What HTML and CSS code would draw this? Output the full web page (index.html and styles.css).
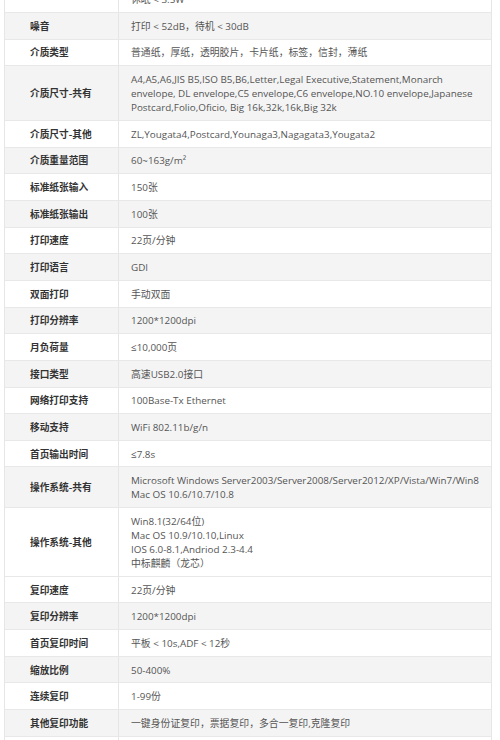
FILE: index.html
```html
<!DOCTYPE html>
<html lang="zh-CN">
<head>
<meta charset="utf-8">
<title>打印机参数</title>
<link rel="stylesheet" href="styles.css">
</head>
<body>
<table class="spec">
  <tbody>
    <tr><td class="k">功耗</td><td class="v">打印 &lt; 450W<br>待机 &lt; 50W<br>休眠 &lt; 3.5W</td></tr>
    <tr class="g"><td class="k">噪音</td><td class="v">打印 &lt; 52dB，待机 &lt; 30dB</td></tr>
    <tr><td class="k">介质类型</td><td class="v">普通纸，厚纸，透明胶片，卡片纸，标签，信封，薄纸</td></tr>
    <tr class="g"><td class="k">介质尺寸-共有</td><td class="v">A4,A5,A6,JIS B5,ISO B5,B6,Letter,Legal Executive,Statement,Monarch<br>envelope, DL envelope,C5 envelope,C6 envelope,NO.10 envelope,Japanese<br>Postcard,Folio,Oficio, Big 16k,32k,16k,Big 32k</td></tr>
    <tr><td class="k">介质尺寸-其他</td><td class="v">ZL,Yougata4,Postcard,Younaga3,Nagagata3,Yougata2</td></tr>
    <tr class="g"><td class="k">介质重量范围</td><td class="v">60~163g/m²</td></tr>
    <tr><td class="k">标准纸张输入</td><td class="v">150张</td></tr>
    <tr class="g"><td class="k">标准纸张输出</td><td class="v">100张</td></tr>
    <tr><td class="k">打印速度</td><td class="v">22页/分钟</td></tr>
    <tr class="g"><td class="k">打印语言</td><td class="v">GDI</td></tr>
    <tr><td class="k">双面打印</td><td class="v">手动双面</td></tr>
    <tr class="g"><td class="k">打印分辨率</td><td class="v">1200*1200dpi</td></tr>
    <tr><td class="k">月负荷量</td><td class="v">≤10,000页</td></tr>
    <tr class="g"><td class="k">接口类型</td><td class="v">高速USB2.0接口</td></tr>
    <tr><td class="k">网络打印支持</td><td class="v">100Base-Tx Ethernet</td></tr>
    <tr class="g"><td class="k">移动支持</td><td class="v">WiFi 802.11b/g/n</td></tr>
    <tr><td class="k">首页输出时间</td><td class="v">≤7.8s</td></tr>
    <tr class="g"><td class="k">操作系统-共有</td><td class="v">Microsoft Windows Server2003/Server2008/Server2012/XP/Vista/Win7/Win8<br>Mac OS 10.6/10.7/10.8</td></tr>
    <tr><td class="k">操作系统-其他</td><td class="v">Win8.1(32/64位)<br>Mac OS 10.9/10.10,Linux<br>IOS 6.0-8.1,Andriod 2.3-4.4<br>中标麒麟（龙芯）</td></tr>
    <tr><td class="k">复印速度</td><td class="v">22页/分钟</td></tr>
    <tr class="g"><td class="k">复印分辨率</td><td class="v">1200*1200dpi</td></tr>
    <tr><td class="k">首页复印时间</td><td class="v">平板 &lt; 10s,ADF &lt; 12秒</td></tr>
    <tr class="g"><td class="k">缩放比例</td><td class="v">50-400%</td></tr>
    <tr><td class="k">连续复印</td><td class="v">1-99份</td></tr>
    <tr class="g"><td class="k">其他复印功能</td><td class="v">一键身份证复印，票据复印，多合一复印,克隆复印</td></tr>
    <tr><td class="k">扫描类型</td><td class="v">平板式+ADF</td></tr>
  </tbody>
</table>
</body>
</html>
```
FILE: styles.css
```css
html, body {
  margin: 0;
  padding: 0;
  background: #ffffff;
}

body {
  font-family: "Open Sans", "Noto Sans CJK SC", sans-serif;
  font-size: 9.7px;
  line-height: 14px;
  overflow: hidden;
}

.spec {
  border-collapse: separate;
  border-spacing: 0;
  margin: -41.7px 0 0 4px;
  width: 488px;
  border-left: 1px solid #e6e6e6;
  border-right: 1px solid #e6e6e6;
}

.spec td {
  padding: 5.83px 0;
  border-bottom: 1px solid #e8e8e8;
  vertical-align: middle;
  background: #ffffff;
}

.spec tr.g td {
  background: #f4f4f4;
}

.spec .k {
  width: 88px;
  padding-left: 25px;
  border-right: 1px solid #e6e6e6;
  color: #333333;
  font-weight: 700;
  font-family: "Noto Sans CJK SC", sans-serif;
  white-space: nowrap;
}

.spec .v {
  padding-left: 12px;
  color: #555555;
  font-size: 9.85px;
  white-space: nowrap;
}
```
